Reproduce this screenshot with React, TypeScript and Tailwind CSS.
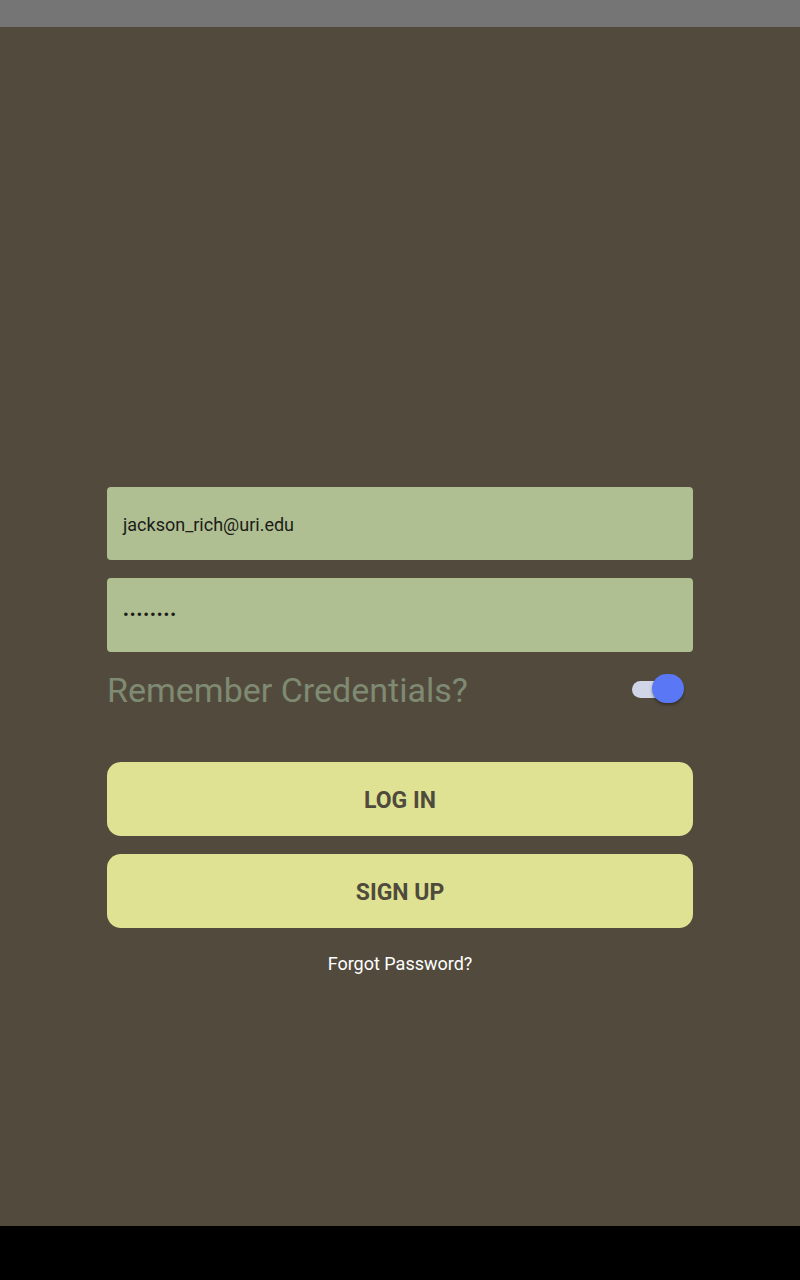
import React, { useState } from "react";

export default function App() {
  const [remember, setRemember] = useState(true);

  return (
    <div className="flex h-[1280px] w-[800px] flex-col bg-black font-['Roboto',sans-serif]">
      <div className="h-[27px] shrink-0 bg-[#757575]" />
      <div className="flex h-[1199px] shrink-0 flex-col bg-[#524b3d] px-[107px] pt-[460px]">
        <div className="flex h-[73px] items-center rounded-[4px] bg-[#afbf92] px-[16px] pt-[2px] text-[18px] text-[#1c1c18]">
          jackson_rich@uri.edu
        </div>
        <div className="mt-[18px] flex h-[74px] items-center rounded-[4px] bg-[#afbf92] px-[16px] text-[17px] tracking-[1px] text-[#1c1c18]">
          ••••••••
        </div>
        <div className="mt-[16px] flex h-[44px] items-center justify-between">
          <span className="text-[34px] leading-none text-[#7f8a72]">Remember Credentials?</span>
          <button
            onClick={() => setRemember(!remember)}
            className="relative mr-[8px] h-[30px] w-[54px]"
          >
            <span className="absolute left-[1px] top-[6px] h-[17px] w-[40px] rounded-full bg-[#d0d6e8]" />
            <span
              className={
                remember
                  ? "absolute left-[21px] top-[-1px] h-[29px] w-[32px] rounded-full bg-[#5a78f5] shadow-[0_2px_3px_rgba(0,0,0,0.35)]"
                  : "absolute left-[0px] top-[-1px] h-[29px] w-[32px] rounded-full bg-[#eeeeee] shadow-[0_2px_3px_rgba(0,0,0,0.35)]"
              }
            />
          </button>
        </div>
        <button className="mt-[50px] flex h-[74px] items-center justify-center rounded-[14px] bg-[#dfe292] pt-[4px] text-[23px] font-bold text-[#4f4a3c]">
          LOG IN
        </button>
        <button className="mt-[18px] flex h-[74px] items-center justify-center rounded-[14px] bg-[#dfe292] pt-[4px] text-[23px] font-bold text-[#4f4a3c]">
          SIGN UP
        </button>
        <div className="mt-[22px] text-center text-[18px] text-white">Forgot Password?</div>
      </div>
    </div>
  );
}
